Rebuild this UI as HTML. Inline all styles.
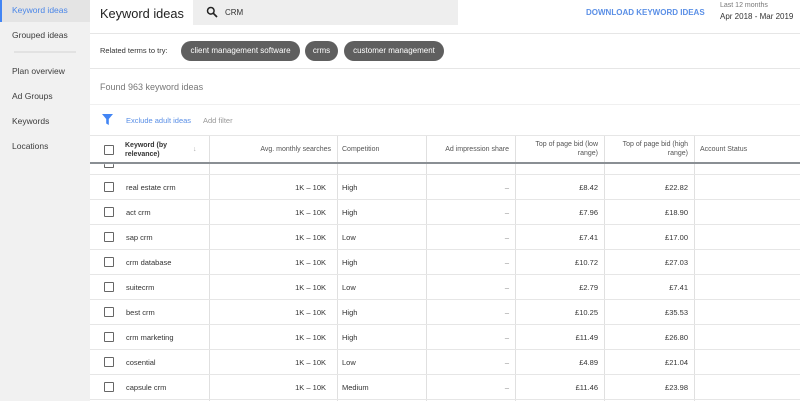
<!DOCTYPE html>
<html><head><style>
*{margin:0;padding:0;box-sizing:border-box}
body{width:800px;height:401px;overflow:hidden;font-family:"Liberation Sans",Arial,sans-serif;background:#fff;position:relative;color:#333}
.side{position:absolute;left:0;top:0;width:90px;height:401px;background:#f1f1f1}
.side div{position:absolute;left:12px;font-size:8.5px;color:#3c3c3c}
.abs{position:absolute}
.chip{position:absolute;top:41px;height:20px;border-radius:10px;background:#5f5f5f;color:#fff;font-size:8px;line-height:20px;text-align:center}
.hl{position:absolute;left:90px;width:710px;height:1px;background:#e6e6e6}
.vl{position:absolute;width:1px;background:#e0e0e0;top:136px;height:265px}
.cb{position:absolute;left:104px;width:10px;height:10px;border:1.5px solid #666;border-radius:1px}
.t{position:absolute;font-size:7.5px;color:#333}
.h{position:absolute;font-size:7px;color:#555;line-height:9px}
</style></head><body>
<div class="side">
<div style="left:0;top:0;width:90px;height:22px;background:#e4e4e4;border-left:2px solid #4285f4"></div>
<div style="top:5px;color:#4a86e8">Keyword ideas</div>
<div style="top:30px">Grouped ideas</div>
<div style="left:14px;top:51px;width:62px;height:2px;background:#e2e2e2"></div>
<div style="top:66px">Plan overview</div>
<div style="top:91px">Ad Groups</div>
<div style="top:116px">Keywords</div>
<div style="top:141px">Locations</div>
</div>
<div class="abs" style="left:100px;top:6px;font-size:12.8px;color:#222">Keyword ideas</div>
<div class="abs" style="left:193px;top:0;width:265px;height:25px;background:#eee"></div>
<svg class="abs" style="left:206px;top:6px" width="12" height="12" viewBox="0 0 12 12"><circle cx="4.8" cy="4.8" r="3.3" fill="none" stroke="#222" stroke-width="1.5"/><path d="M7.2 7.2L11 11" stroke="#222" stroke-width="1.7"/></svg>
<div class="abs" style="left:225px;top:8px;font-size:8px;color:#333">CRM</div>
<div class="abs" style="left:586px;top:8px;font-size:8px;font-weight:bold;color:#5a8fe6">DOWNLOAD KEYWORD IDEAS</div>
<div class="abs" style="left:720px;top:2px;font-size:7px;color:#777">Last 12 months</div>
<div class="abs" style="left:720px;top:12px;font-size:8px;color:#333">Apr 2018 - Mar 2019</div>
<div class="hl" style="top:33px"></div>
<div class="abs" style="left:100px;top:46px;font-size:7.5px;color:#333">Related terms to try:</div>
<div class="chip" style="left:181px;width:119px">client management software</div>
<div class="chip" style="left:305px;width:33px">crms</div>
<div class="chip" style="left:344px;width:100px">customer management</div>
<div class="hl" style="top:68px"></div>
<div class="abs" style="left:100px;top:82px;font-size:9px;color:#777">Found 963 keyword ideas</div>
<div class="hl" style="top:104px;background:#f0f0f0"></div>
<svg class="abs" style="left:102px;top:114px" width="11" height="11" viewBox="0 0 11 11"><path d="M0 0H11L6.8 5V11L4.2 9.5V5Z" fill="#4285f4"/></svg>
<div class="abs" style="left:126px;top:116px;font-size:7.5px;color:#5a8fe6">Exclude adult ideas</div>
<div class="abs" style="left:203px;top:116px;font-size:7.5px;color:#999">Add filter</div>
<div class="hl" style="top:135px"></div>
<div class="vl" style="left:209px"></div><div class="vl" style="left:337px"></div><div class="vl" style="left:426px"></div><div class="vl" style="left:515px"></div><div class="vl" style="left:604px"></div><div class="vl" style="left:694px"></div>
<div class="cb" style="top:145px"></div>
<div class="h" style="left:125px;top:141px;font-weight:bold;color:#333">Keyword (by<br>relevance)</div>
<div class="h" style="left:193px;top:145px;color:#aaa">↓</div>
<div class="h" style="left:209px;width:122px;text-align:right;top:145px">Avg. monthly searches</div>
<div class="h" style="left:342px;top:145px">Competition</div>
<div class="h" style="left:426px;width:83px;text-align:right;top:145px">Ad impression share</div>
<div class="h" style="left:515px;width:83px;text-align:right;top:140px">Top of page bid (low<br>range)</div>
<div class="h" style="left:604px;width:84px;text-align:right;top:140px">Top of page bid (high<br>range)</div>
<div class="h" style="left:700px;top:145px">Account Status</div>
<div class="abs" style="left:90px;top:162px;width:710px;height:2px;background:#8a8f94"></div>
<div class="cb" style="top:164px;height:4px;border-top:none"></div>
<div class="hl" style="top:174px"></div>
<div id="rows"></div>
<script>
var d=[["real estate crm","High","£8.42","£22.82"],["act crm","High","£7.96","£18.90"],["sap crm","Low","£7.41","£17.00"],["crm database","High","£10.72","£27.03"],["suitecrm","Low","£2.79","£7.41"],["best crm","High","£10.25","£35.53"],["crm marketing","High","£11.49","£26.80"],["cosential","Low","£4.89","£21.04"],["capsule crm","Medium","£11.46","£23.98"]];
var h="";d.forEach(function(r,i){var y=175+i*25;
h+='<div class="cb" style="top:'+(y+7)+'px"></div><div class="t" style="left:126px;top:'+(y+8)+'px">'+r[0]+'</div><div class="t" style="left:209px;width:117px;text-align:right;top:'+(y+8)+'px">1K – 10K</div><div class="t" style="left:342px;top:'+(y+8)+'px">'+r[1]+'</div><div class="t" style="left:426px;width:83px;text-align:right;top:'+(y+8)+'px;color:#888">–</div><div class="t" style="left:515px;width:83px;text-align:right;top:'+(y+8)+'px">'+r[2]+'</div><div class="t" style="left:604px;width:84px;text-align:right;top:'+(y+8)+'px">'+r[3]+'</div><div class="hl" style="top:'+(y+24)+'px"></div>';});
document.getElementById("rows").innerHTML=h;
</script>
</body></html>
